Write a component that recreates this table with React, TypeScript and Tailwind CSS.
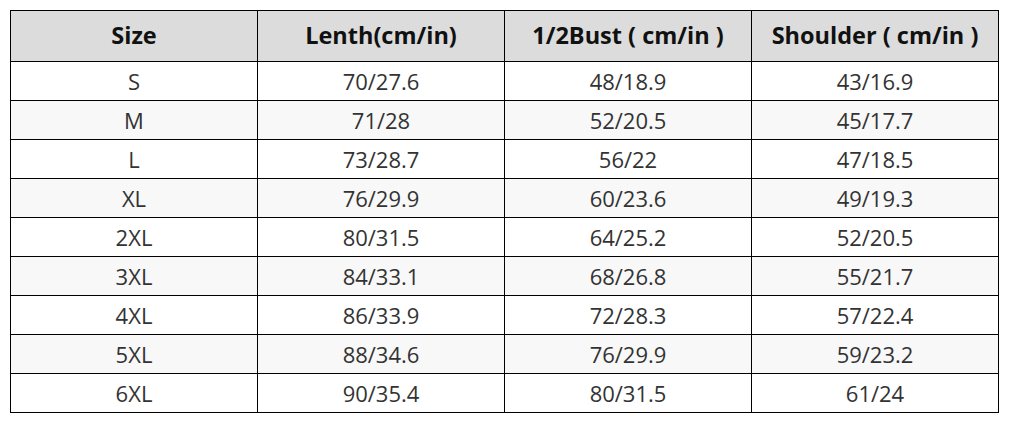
const HEADERS = ["Size", "Lenth(cm/in)", "1/2Bust\u00a0( cm/in )", "Shoulder\u00a0( cm/in )"];

const ROWS: string[][] = [
  ["S", "70/27.6", "48/18.9", "43/16.9"],
  ["M", "71/28", "52/20.5", "45/17.7"],
  ["L", "73/28.7", "56/22", "47/18.5"],
  ["XL", "76/29.9", "60/23.6", "49/19.3"],
  ["2XL", "80/31.5", "64/25.2", "52/20.5"],
  ["3XL", "84/33.1", "68/26.8", "55/21.7"],
  ["4XL", "86/33.9", "72/28.3", "57/22.4"],
  ["5XL", "88/34.6", "76/29.9", "59/23.2"],
  ["6XL", "90/35.4", "80/31.5", "61/24"],
];

export default function App() {
  return (
    <div className="min-h-[423px] w-[1012px] bg-white pl-[10px] pt-[10px] font-['Open_Sans','Noto_Sans',sans-serif]">
      <table className="w-[989px] table-fixed border-collapse">
        <thead>
          <tr className="h-[51px] bg-[#dcdcdc]">
            {HEADERS.map((h) => (
              <th
                key={h}
                className="border-[1.5px] border-black text-center text-[23.5px] leading-none font-bold text-[#111]"
              >
                {h}
              </th>
            ))}
          </tr>
        </thead>
        <tbody>
          {ROWS.map((row, i) => (
            <tr key={row[0]} className={`h-[39px] ${i % 2 === 1 ? "bg-[#f8f8f8]" : "bg-white"}`}>
              {row.map((cell, j) => (
                <td
                  key={j}
                  className="border-[1.5px] border-black text-center text-[22px] leading-none text-[#333]"
                >
                  {cell}
                </td>
              ))}
            </tr>
          ))}
        </tbody>
      </table>
    </div>
  );
}
